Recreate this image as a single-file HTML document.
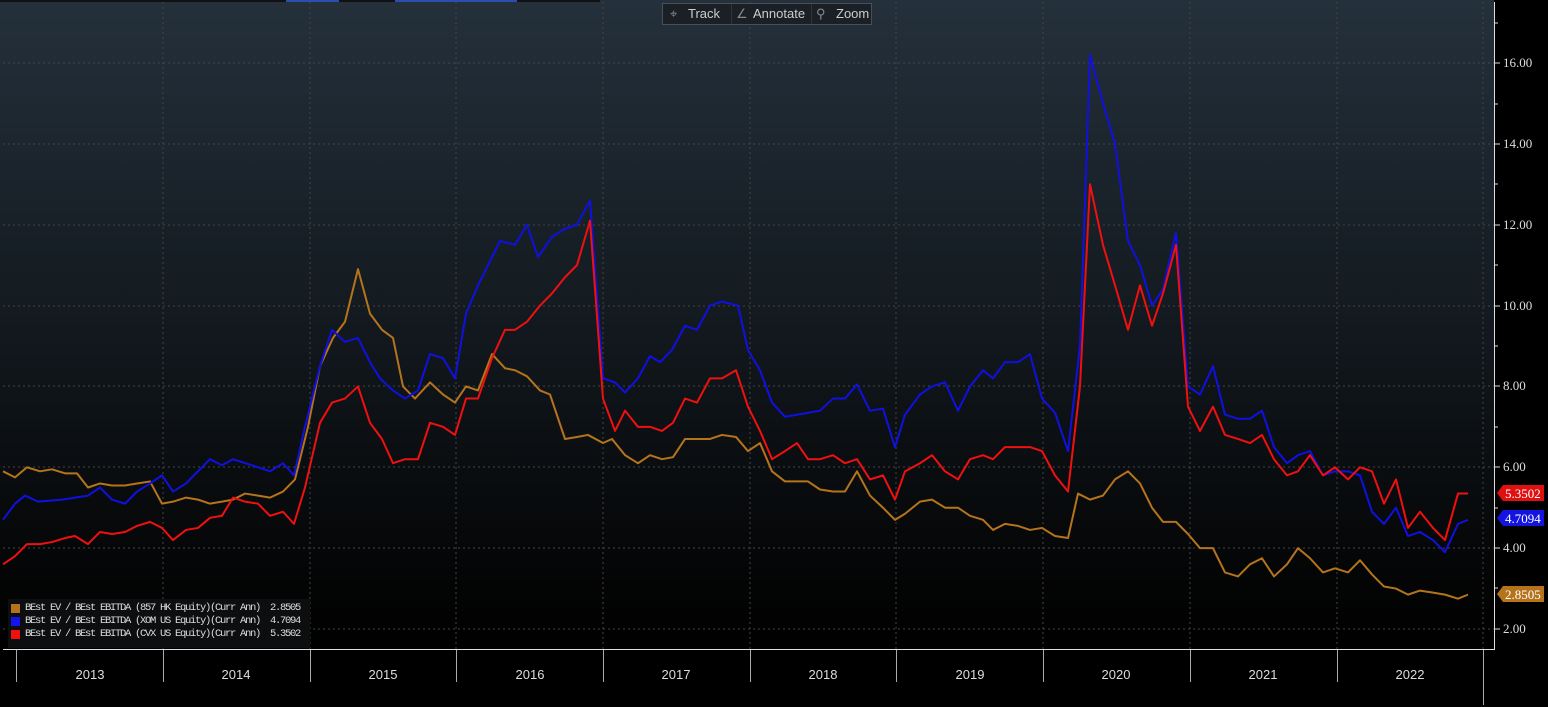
<!DOCTYPE html>
<html><head><meta charset="utf-8"><style>
html,body{margin:0;padding:0;background:#000;width:1548px;height:707px;overflow:hidden;font-family:"Liberation Sans",sans-serif}
#bg{position:absolute;left:0;top:0;width:1494px;height:649px;background:linear-gradient(#24303b 0px,#141b21 300px,#050607 560px,#000 649px)}
.tb{position:absolute;left:662px;top:3px;width:208px;height:20px;border:1px solid #4a4f55;background:#1b2026;color:#ccc;font-size:13px;line-height:20px}
.tb span{position:absolute;top:0}
.leg{position:absolute;left:8px;top:599px;width:302px;height:46px;background:#0c0e10;font-family:"Liberation Mono",monospace;font-size:10.5px;letter-spacing:-1.3px;color:#ddd;line-height:13px;padding-top:3px}
.leg div{padding-left:17px;position:relative;white-space:pre}
.leg i{position:absolute;left:3px;top:2px;width:9px;height:9px}
.yr{position:absolute;top:667px;color:#ddd;font-size:13px;width:100px;text-align:center}
.yl{position:absolute;left:1503px;color:#ddd;font-size:13px;font-family:"Liberation Serif",serif}
</style></head><body>
<div id="bg"></div>
<div style="position:absolute;left:0;top:0;width:600px;height:2px;background:#111"></div>
<div style="position:absolute;left:286px;top:0;width:53px;height:2px;background:#2a4fb0"></div>
<div style="position:absolute;left:395px;top:0;width:122px;height:2px;background:#2a4fb0"></div>
<svg width="1548" height="707" style="position:absolute;left:0;top:0">
<g stroke="#444" stroke-dasharray="2,3" stroke-width="1">
<line x1="3" x2="1494" y1="63" y2="63"/><line x1="3" x2="1494" y1="144" y2="144"/><line x1="3" x2="1494" y1="225" y2="225"/><line x1="3" x2="1494" y1="306" y2="306"/><line x1="3" x2="1494" y1="386" y2="386"/><line x1="3" x2="1494" y1="467" y2="467"/><line x1="3" x2="1494" y1="548" y2="548"/><line x1="3" x2="1494" y1="629" y2="629"/>
<line x1="163" x2="163" y1="2" y2="649"/><line x1="310" x2="310" y1="2" y2="649"/><line x1="456" x2="456" y1="2" y2="649"/><line x1="603" x2="603" y1="2" y2="649"/><line x1="750" x2="750" y1="2" y2="649"/><line x1="896" x2="896" y1="2" y2="649"/><line x1="1043" x2="1043" y1="2" y2="649"/><line x1="1190" x2="1190" y1="2" y2="649"/><line x1="1337" x2="1337" y1="2" y2="649"/><line x1="1483" x2="1483" y1="2" y2="649"/>
</g>
<g transform="translate(0,629) scale(1,-40.43) translate(0,-2)" fill="none" stroke-width="2" stroke-linejoin="round">
<polyline vector-effect="non-scaling-stroke" stroke="#b5741c" points="3,5.9 15,5.75 27,6.0 40,5.9 52,5.95 65,5.85 77,5.85 88,5.5 100,5.6 112,5.55 125,5.55 137,5.6 150,5.65 162,5.1 173,5.15 186,5.25 198,5.2 210,5.1 222,5.15 233,5.2 245,5.35 258,5.3 270,5.25 283,5.4 295,5.7 308,7.0 320,8.5 333,9.2 345,9.6 358,10.9 370,9.8 382,9.4 393,9.2 403,8.0 415,7.7 430,8.1 443,7.8 455,7.6 466,8.0 478,7.9 492,8.8 505,8.45 515,8.4 527,8.25 540,7.9 550,7.8 565,6.7 577,6.75 588,6.8 603,6.6 612,6.7 625,6.3 638,6.1 650,6.3 662,6.2 673,6.25 685,6.7 697,6.7 710,6.7 722,6.8 736,6.75 748,6.4 760,6.6 772,5.9 785,5.65 797,5.65 808,5.65 820,5.45 833,5.4 845,5.4 857,5.9 870,5.3 883,5.0 895,4.7 905,4.85 920,5.15 932,5.2 945,5.0 958,5.0 970,4.8 983,4.7 993,4.45 1005,4.6 1018,4.55 1030,4.45 1042,4.5 1055,4.3 1068,4.25 1078,5.35 1090,5.2 1103,5.3 1115,5.7 1128,5.9 1140,5.6 1152,5.0 1163,4.65 1176,4.65 1188,4.35 1200,4.0 1213,4.0 1225,3.4 1238,3.3 1250,3.6 1262,3.75 1274,3.3 1287,3.6 1298,4.0 1310,3.75 1323,3.4 1335,3.5 1348,3.4 1360,3.7 1372,3.35 1384,3.05 1396,3.0 1408,2.85 1420,2.95 1433,2.9 1445,2.85 1458,2.75 1468,2.85"/>
<polyline vector-effect="non-scaling-stroke" stroke="#1010e0" points="3,4.7 15,5.1 25,5.3 38,5.15 62,5.2 75,5.25 88,5.3 100,5.5 112,5.2 125,5.1 137,5.4 150,5.6 162,5.8 173,5.4 186,5.6 198,5.9 210,6.2 222,6.05 233,6.2 258,6.0 270,5.9 283,6.1 294,5.8 305,7.0 320,8.5 332,9.4 345,9.1 358,9.2 370,8.6 380,8.2 393,7.9 405,7.7 418,7.9 430,8.8 443,8.7 455,8.2 466,9.8 478,10.5 500,11.6 515,11.5 527,12.0 538,11.2 552,11.7 565,11.9 577,12.0 590,12.6 603,8.2 615,8.1 625,7.85 638,8.2 650,8.75 660,8.6 672,8.9 685,9.5 697,9.4 710,10.0 722,10.1 738,10.0 748,8.9 760,8.4 772,7.6 785,7.25 797,7.3 820,7.4 833,7.7 845,7.7 857,8.05 870,7.4 883,7.45 895,6.5 905,7.3 920,7.8 932,8.0 945,8.1 958,7.4 970,8.0 983,8.4 993,8.2 1005,8.6 1018,8.6 1030,8.8 1042,7.7 1055,7.35 1068,6.4 1080,9.0 1090,16.2 1103,15.0 1115,14.0 1128,11.6 1140,11.0 1152,10.0 1163,10.4 1176,11.8 1188,8.0 1200,7.8 1213,8.5 1225,7.3 1238,7.2 1250,7.2 1262,7.4 1274,6.5 1287,6.1 1298,6.3 1310,6.4 1323,5.8 1335,5.9 1348,5.9 1360,5.8 1372,4.9 1384,4.6 1396,5.0 1408,4.3 1420,4.4 1433,4.2 1445,3.9 1458,4.6 1468,4.7"/>
<polyline vector-effect="non-scaling-stroke" stroke="#f01010" points="3,3.6 15,3.8 27,4.1 40,4.1 52,4.15 65,4.25 75,4.3 88,4.1 100,4.4 112,4.35 125,4.4 137,4.55 150,4.65 162,4.5 173,4.2 186,4.45 198,4.5 210,4.75 222,4.8 233,5.25 245,5.15 258,5.1 270,4.8 283,4.9 294,4.6 305,5.5 320,7.1 332,7.6 345,7.7 358,8.0 370,7.1 382,6.7 393,6.1 405,6.2 418,6.2 430,7.1 443,7.0 455,6.8 466,7.7 478,7.7 492,8.7 505,9.4 515,9.4 527,9.6 540,10.0 552,10.3 565,10.7 577,11.0 590,12.1 603,7.7 615,6.9 625,7.4 638,7.0 650,7.0 662,6.9 673,7.1 685,7.7 697,7.6 710,8.2 722,8.2 736,8.4 748,7.5 760,6.9 772,6.2 785,6.4 797,6.6 808,6.2 820,6.2 833,6.3 845,6.1 857,6.2 870,5.7 883,5.8 895,5.2 905,5.9 920,6.1 932,6.3 945,5.9 958,5.7 970,6.2 983,6.3 993,6.2 1005,6.5 1018,6.5 1030,6.5 1042,6.4 1055,5.8 1068,5.4 1080,8.0 1090,13.0 1103,11.5 1115,10.5 1128,9.4 1140,10.5 1152,9.5 1163,10.3 1176,11.5 1188,7.5 1200,6.9 1213,7.5 1225,6.8 1238,6.7 1250,6.6 1262,6.8 1274,6.2 1287,5.8 1298,5.9 1310,6.3 1323,5.8 1335,6.0 1348,5.7 1360,6.0 1372,5.9 1384,5.1 1396,5.7 1408,4.5 1420,4.9 1433,4.5 1445,4.2 1458,5.35 1468,5.35"/>
</g>
<g stroke="#ddd" stroke-width="1">
<line x1="1494.5" x2="1494.5" y1="2" y2="650"/>
<line x1="3" x2="1495" y1="649.5" y2="649.5"/>
<g stroke="#aaa"><line x1="16.5" x2="16.5" y1="650" y2="682"/><line x1="163.5" x2="163.5" y1="650" y2="682"/><line x1="310.5" x2="310.5" y1="650" y2="682"/><line x1="456.5" x2="456.5" y1="650" y2="682"/><line x1="603.5" x2="603.5" y1="650" y2="682"/><line x1="750.5" x2="750.5" y1="650" y2="682"/><line x1="896.5" x2="896.5" y1="650" y2="682"/><line x1="1043.5" x2="1043.5" y1="650" y2="682"/><line x1="1190.5" x2="1190.5" y1="650" y2="682"/><line x1="1337.5" x2="1337.5" y1="650" y2="682"/><line x1="1483.5" x2="1483.5" y1="650" y2="705"/></g>
<line x1="1495" x2="1500" y1="63" y2="63"/><line x1="1495" x2="1500" y1="144" y2="144"/><line x1="1495" x2="1500" y1="225" y2="225"/><line x1="1495" x2="1500" y1="306" y2="306"/><line x1="1495" x2="1500" y1="386" y2="386"/><line x1="1495" x2="1500" y1="467" y2="467"/><line x1="1495" x2="1500" y1="548" y2="548"/><line x1="1495" x2="1500" y1="629" y2="629"/>
<line x1="1495" x2="1498" y1="23" y2="23"/><line x1="1495" x2="1498" y1="104" y2="104"/><line x1="1495" x2="1498" y1="184" y2="184"/><line x1="1495" x2="1498" y1="265" y2="265"/><line x1="1495" x2="1498" y1="346" y2="346"/><line x1="1495" x2="1498" y1="427" y2="427"/><line x1="1495" x2="1498" y1="508" y2="508"/><line x1="1495" x2="1498" y1="588" y2="588"/>
</g>
<polygon points="1497,493 1503,485 1544,485 1544,501 1503,501" fill="#e01010"/>
<polygon points="1497,518 1503,510 1544,510 1544,526 1503,526" fill="#1414e0"/>
<polygon points="1497,594 1503,586 1544,586 1544,602 1503,602" fill="#b5741c"/>
<text x="1505" y="498" fill="#fff" font-family="Liberation Serif,serif" font-size="13">5.3502</text>
<text x="1505" y="523" fill="#fff" font-family="Liberation Serif,serif" font-size="13">4.7094</text>
<text x="1505" y="599" fill="#fff" font-family="Liberation Serif,serif" font-size="13">2.8505</text>
</svg>
<div class="yl" style="top:55px">16.00</div><div class="yl" style="top:136px">14.00</div><div class="yl" style="top:217px">12.00</div><div class="yl" style="top:298px">10.00</div><div class="yl" style="top:378px">8.00</div><div class="yl" style="top:459px">6.00</div><div class="yl" style="top:540px">4.00</div><div class="yl" style="top:621px">2.00</div>
<div class="yr" style="left:40px">2013</div><div class="yr" style="left:186px">2014</div><div class="yr" style="left:333px">2015</div><div class="yr" style="left:480px">2016</div><div class="yr" style="left:626px">2017</div><div class="yr" style="left:773px">2018</div><div class="yr" style="left:920px">2019</div><div class="yr" style="left:1066px">2020</div><div class="yr" style="left:1213px">2021</div><div class="yr" style="left:1360px">2022</div>
<div class="tb"><span style="left:7px;color:#888">⌖</span><span style="left:25px">Track</span><span style="left:68px;border-left:1px solid #333;padding-left:4px;color:#888">∠</span><span style="left:90px">Annotate</span><span style="left:148px;border-left:1px solid #333;padding-left:4px;color:#888">⚲</span><span style="left:173px">Zoom</span></div>
<div class="leg">
<div><i style="background:#b5741c"></i>BEst EV / BEst EBITDA (857 HK Equity)(Curr Ann)  2.8505</div>
<div><i style="background:#1414f0"></i>BEst EV / BEst EBITDA (XOM US Equity)(Curr Ann)  4.7094</div>
<div><i style="background:#f01010"></i>BEst EV / BEst EBITDA (CVX US Equity)(Curr Ann)  5.3502</div>
</div>
</body></html>
